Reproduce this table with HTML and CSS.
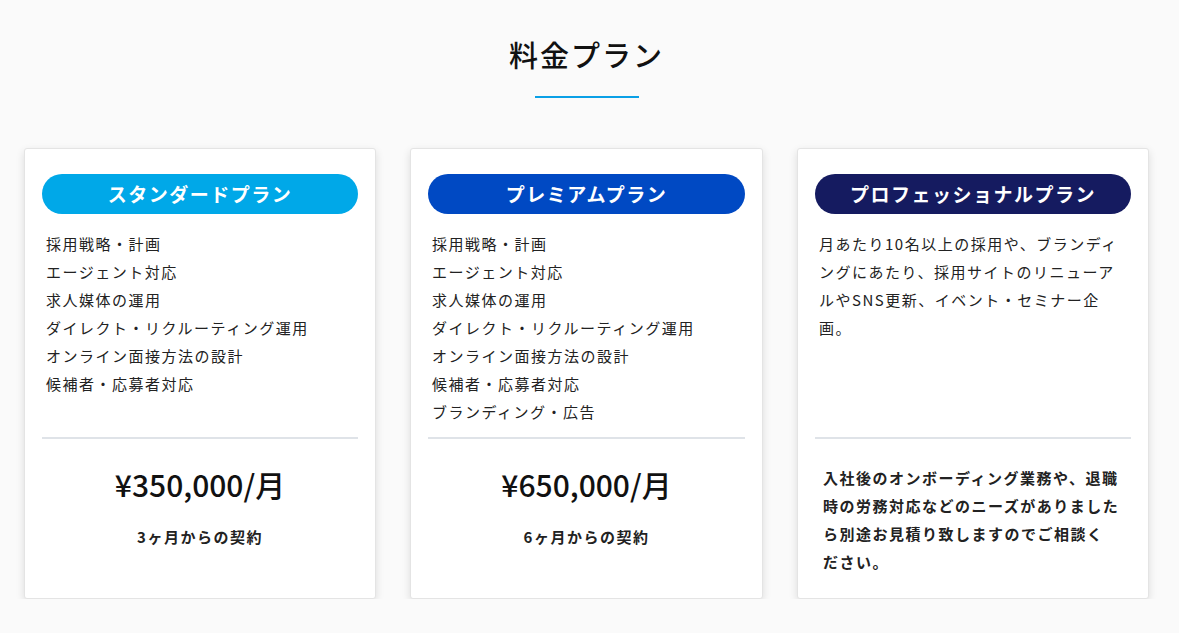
FILE: index.html
```html
<!DOCTYPE html>
<html lang="ja">
<head>
<meta charset="utf-8">
<title>料金プラン</title>
<link rel="stylesheet" href="styles.css">
</head>
<body>
<section class="pricing">
  <h2 class="title">料金プラン</h2>
  <div class="title-line"></div>
  <div class="cards">
    <div class="card">
      <div class="pill pill-standard">スタンダードプラン</div>
      <div class="card-top">
        <ul class="features">
          <li>採用戦略・計画</li>
          <li>エージェント対応</li>
          <li>求人媒体の運用</li>
          <li>ダイレクト・リクルーティング運用</li>
          <li>オンライン面接方法の設計</li>
          <li>候補者・応募者対応</li>
        </ul>
      </div>
      <div class="divider"></div>
      <div class="price">¥350,000/月</div>
      <div class="term">3ヶ月からの契約</div>
    </div>
    <div class="card">
      <div class="pill pill-premium">プレミアムプラン</div>
      <div class="card-top">
        <ul class="features">
          <li>採用戦略・計画</li>
          <li>エージェント対応</li>
          <li>求人媒体の運用</li>
          <li>ダイレクト・リクルーティング運用</li>
          <li>オンライン面接方法の設計</li>
          <li>候補者・応募者対応</li>
          <li>ブランディング・広告</li>
        </ul>
      </div>
      <div class="divider"></div>
      <div class="price">¥650,000/月</div>
      <div class="term">6ヶ月からの契約</div>
    </div>
    <div class="card">
      <div class="pill pill-pro">プロフェッショナルプラン</div>
      <div class="card-top">
        <p class="desc">月あたり10名以上の採用や、ブランディングにあたり、採用サイトのリニューアルやSNS更新、イベント・セミナー企画。</p>
      </div>
      <div class="divider"></div>
      <p class="note">入社後のオンボーディング業務や、退職時の労務対応などのニーズがありましたら別途お見積り致しますのでご相談く<br>ださい。</p>
    </div>
  </div>
</section>
</body>
</html>
```

FILE: styles.css
```css
* { box-sizing: border-box; }
html, body { margin: 0; padding: 0; }
body {
  background: #fafafa;
  font-family: "Noto Sans CJK JP", "Noto Sans", sans-serif;
  color: #222;
}
.pricing {
  padding: 32px 0 0 24px;
  width: 1149px;
}
.title {
  margin: 0;
  text-align: center;
  font-size: 29px;
  font-weight: 500;
  letter-spacing: 2px;
  line-height: 44px;
  color: #111;
}
.title-line {
  width: 104px;
  height: 2px;
  background: #0aa0e6;
  margin: 20px auto 0;
}
.cards {
  display: grid;
  grid-template-columns: 352px 353px 352px;
  column-gap: 34px;
  margin-top: 50px;
}
.card {
  background: #fff;
  border: 1px solid #e4e4e4;
  border-radius: 3px;
  box-shadow: 0 3px 8px rgba(0,0,0,0.12);
  padding: 25px 17px 0;
  height: 451px;
  display: flex;
  flex-direction: column;
}
.pill {
  height: 40px;
  border-radius: 20px;
  color: #fff;
  font-weight: 700;
  font-size: 19px;
  letter-spacing: 1.5px;
  line-height: 40px;
  text-align: center;
}
.pill-standard { background: #00a8e8; }
.pill-premium { background: #0049c3; }
.pill-pro { background: #151b60; }
.card-top {
  height: 223px;
  padding: 16px 5px 0 4px;
}
.features {
  list-style: none;
  margin: 0;
  padding: 0;
}
.features li, .desc {
  font-size: 15px;
  line-height: 28px;
  letter-spacing: 1.5px;
  color: #222;
}
.desc { margin: 0; }
.divider {
  height: 2px;
  background: #dfe3e8;
}
.price {
  margin-top: 25px;
  text-align: center;
  font-size: 30px;
  font-weight: 500;
  line-height: 40px;
  color: #111;
}
.term {
  margin-top: 19px;
  text-align: center;
  font-size: 15px;
  font-weight: 700;
  line-height: 28px;
  letter-spacing: 1.5px;
  color: #222;
}
.note {
  margin: 25px 0 0;
  padding: 0 9px 0 8px;
  font-size: 15px;
  font-weight: 700;
  line-height: 28px;
  letter-spacing: 1.5px;
  color: #222;
}
```
